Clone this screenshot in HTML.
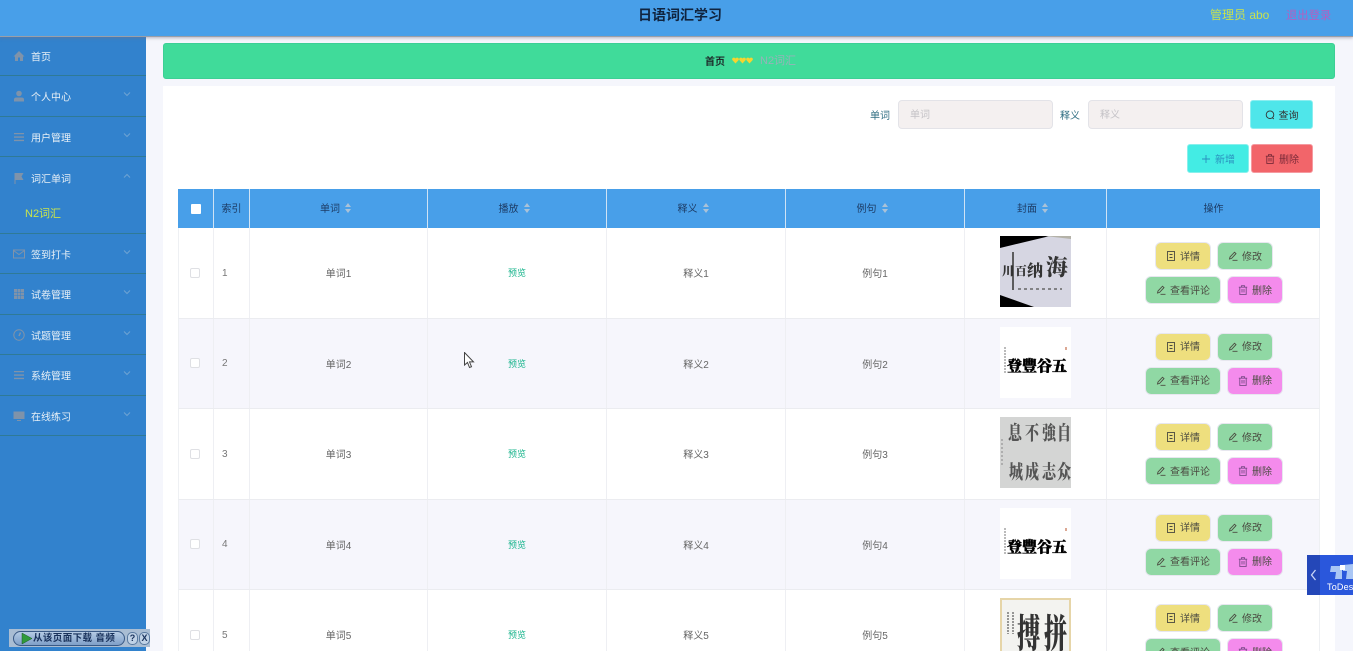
<!DOCTYPE html>
<html lang="zh-CN">
<head>
<meta charset="utf-8">
<title>日语词汇学习</title>
<style>
*{box-sizing:border-box;margin:0;padding:0}
html,body{width:1353px;height:651px;overflow:hidden}
body{position:relative;background:#f5f6fc;font-family:"Liberation Sans","Noto Sans CJK SC",sans-serif;font-size:10px;color:#666;filter:blur(.35px)}
.a{position:absolute}
#top{left:0;top:0;width:1353px;height:37px;background:#489fe9;border-bottom:1px solid #9a9fa8;box-shadow:0 1px 3px rgba(120,110,130,.5);z-index:3}
#title{left:0;width:1353px;top:5px;text-align:center;font-size:14px;line-height:20px;font-weight:700;color:#10243f;padding-left:7px}
#side{left:0;top:37px;width:146px;height:614px;background:#3282cd;z-index:2}
.m{position:absolute;left:0;width:146px;border-bottom:1px solid #2f7a96}
.m span{position:absolute;left:31px;top:50%;transform:translateY(-50%);color:#e8f0f6;font-size:10px;white-space:nowrap}
.m svg.i{position:absolute;left:13px;top:50%;margin-top:-6px;width:12px;height:12px;fill:#7f93aa}
.m svg.c{position:absolute;left:123px;top:50%;margin-top:-6px;width:8px;height:8px;fill:none;stroke:#6ea3d3;stroke-width:1}
#sub{position:absolute;left:25px;color:#c9e44d;font-size:11px;line-height:14px}
#crumb{left:163px;top:43px;width:1172px;height:36px;background:#40db9a;border-radius:3px;border:1px solid #3ccf95}
#panel{left:163px;top:86px;width:1172px;height:565px;background:#fff}
.inp{height:29px;width:155px;top:100px;background:#f4f0f0;border:1px solid #e3e3e8;border-radius:4px;color:#c4c2c6;padding-left:11px;line-height:30px}
.lb{top:107px;color:#2f6e82}
.b{height:29px;width:63px;border-radius:3px;display:flex;align-items:center;justify-content:center;gap:4px;color:#333}
.b svg,.o svg{width:10px;height:10px;fill:none;stroke:currentColor;stroke-width:.9}
#head{left:178px;top:189px;width:1142px;height:39px;background:#489fe9;color:#1d3c66;z-index:1}
.h{position:absolute;top:0;height:39px;border-right:1px solid #cfe3f5;display:flex;align-items:center;justify-content:center;gap:4px;padding-bottom:2px}
.s{transform:translateX(-3px);font-weight:400}
.h i{display:block;width:7px;height:10px;position:relative;transform:translateX(-2px)}
.h i:before,.h i:after{content:"";position:absolute;left:0;border-left:3.5px solid transparent;border-right:3.5px solid transparent}
.h i:before{top:0;border-bottom:4px solid #aac2d8}
.h i:after{bottom:0;border-top:4px solid #aac2d8}
.r{position:absolute;left:178px;width:1142px;border-bottom:1px solid #ebecf0;border-left:1px solid #eef0f3;border-right:1px solid #eef0f3;background:#fff}
.r.e{background:#f6f6fc}
.d{position:absolute;top:0;height:100%;border-right:1px solid #eeeff3;display:flex;align-items:center;justify-content:center}
.d1{left:0;width:35px;padding-right:3px}
.d2{left:35px;width:36px;justify-content:flex-start;padding-left:8px;padding-top:1px;color:#777}
.d3{left:71px;width:178px}
.d4{left:249px;width:179px;color:#18b48c;font-size:9px}
.d5{left:428px;width:179px}
.d6{left:607px;width:179px}
.d7{left:786px;width:142px}
.chk{width:10px;height:10px;border:1px solid #dfe0e4;border-radius:2px;background:#fff}
.pic{position:absolute;left:821px;top:8px;width:71px;height:71px;overflow:hidden}
.pic text{font-family:"Noto Serif CJK SC","Liberation Serif",serif;font-weight:900}
.o{position:absolute;height:28px;border-radius:6px;display:flex;align-items:center;justify-content:center;gap:4px;color:#4a4a40;border:1px solid #e7e7ef;z-index:1;padding-bottom:2px}
.o svg{position:relative;top:1px}
.y{background:#eedf7e;width:56px;left:1155px}
.g{background:#90d8a4;width:56px;left:1217px}
.v{background:#90d8a4;width:76px;left:1145px}
.p{background:#f48bec;width:56px;left:1227px}
.p svg{color:#7a4a88}
</style>
</head>
<body>
<svg width="0" height="0" style="position:absolute">
<defs>
<symbol id="doc" viewBox="0 0 10 10"><rect x="1.500" y=".5" width="7" height="9"/><path d="M3.500 3.500h3M3.500 6.500h3"/></symbol>
<symbol id="pen" viewBox="0 0 10 10"><path d="M1.500 8 2 6 6.500 1.200 8 2.600 3.600 7.400 1.500 8ZM4.500 9.300h5"/></symbol>
<symbol id="bin" viewBox="0 0 10 10"><path d="M.8 2.200h8.400M3.500 2.200V.7h3v1.500M1.800 2.200v7.200h6.400V2.200M4 4v3.500M6 4v3.500"/></symbol>
<symbol id="chev" viewBox="0 0 8 8"><path d="M1 2.500 4 5.500 7 2.500"/></symbol>
</defs>
</svg>

<div class="a" id="top">
  <div class="a" id="title">日语词汇学习</div>
  <div class="a" style="left:1210px;top:7px;font-size:12px;line-height:16px;color:#c8e24e;white-space:nowrap">管理员 abo</div>
  <div class="a" style="left:1286px;top:8px;font-size:11.300px;line-height:16px;color:#b45fc0;white-space:nowrap">退出登录</div>
</div>

<div class="a" id="side">
  <div class="m" style="top:0;height:39px"><svg class="i" viewBox="0 0 12 12"><path d="M6 1 .5 6.500H2V11h3V7.500h2V11h3V6.500h1.500Z"/></svg><span>首页</span></div>
  <div class="m" style="top:39px;height:41px"><svg class="i" viewBox="0 0 12 12"><circle cx="6" cy="3.500" r="2.800"/><path d="M1 11.500V9.500Q1 7.500 3.500 7.500h5Q11 7.500 11 9.500v2Z"/></svg><span>个人中心</span><svg class="c"><use href="#chev"/></svg></div>
  <div class="m" style="top:80px;height:40px"><svg class="i" viewBox="0 0 12 12"><path d="M1 2h10v1.300H1ZM1 5.400h10v1.300H1ZM1 8.800h10v1.300H1Z"/></svg><span>用户管理</span><svg class="c"><use href="#chev"/></svg></div>
  <div class="m" style="top:120px;height:77px"><svg class="i" style="top:15px;margin:0" viewBox="0 0 12 12"><path d="M1.500 1h9L8.500 4.500l2 3.500H2.500v4h-1Z"/></svg><span style="top:21px">词汇单词</span><svg class="c" style="top:15px;margin:0;transform:rotate(180deg)"><use href="#chev"/></svg><div id="sub" style="top:50px">N2词汇</div></div>
  <div class="m" style="top:197px;height:40px"><svg class="i" style="fill:none;stroke:#7f93aa" viewBox="0 0 12 12"><rect x=".5" y="2" width="11" height="8"/><path d="M.5 2.500 6 6.500l5.500-4"/></svg><span>签到打卡</span><svg class="c"><use href="#chev"/></svg></div>
  <div class="m" style="top:237px;height:41px"><svg class="i" viewBox="0 0 12 12"><path d="M1 1h3v3H1ZM4.500 1h3v3h-3ZM8 1h3v3H8ZM1 4.500h3v3H1ZM4.500 4.500h3v3h-3ZM8 4.500h3v3H8ZM1 8h3v3H1ZM4.500 8h3v3h-3ZM8 8h3v3H8Z"/></svg><span>试卷管理</span><svg class="c"><use href="#chev"/></svg></div>
  <div class="m" style="top:278px;height:40px"><svg class="i" style="fill:none;stroke:#7f93aa" viewBox="0 0 12 12"><circle cx="6" cy="6" r="5.200"/><path d="M6 7 7.500 3.500" stroke-width="1.500"/></svg><span>试题管理</span><svg class="c"><use href="#chev"/></svg></div>
  <div class="m" style="top:318px;height:41px"><svg class="i" viewBox="0 0 12 12"><path d="M1 2h10v1.300H1ZM1 5.400h10v1.300H1ZM1 8.800h10v1.300H1Z"/></svg><span>系统管理</span><svg class="c"><use href="#chev"/></svg></div>
  <div class="m" style="top:359px;height:40px"><svg class="i" viewBox="0 0 12 12"><path d="M.5 1.500h11v7.500H.5ZM4 10h4v1H4Z"/></svg><span>在线练习</span><svg class="c"><use href="#chev"/></svg></div>
</div>

<div class="a" id="crumb">
  <div class="a" style="left:541px;top:9px;font-weight:700;color:#1d2b2a">首页</div>
  <svg class="a" style="left:568px;top:13px" width="21" height="7" viewBox="0 0 21 7"><path d="M3.500 6.500 .3 3Q-.3 1 1.500.6 3 .4 3.500 1.500 4 .4 5.500.6 7.300 1 6.700 3ZM10.500 6.500 7.300 3Q6.700 1 8.500.6 10 .4 10.500 1.500 11 .4 12.500.6 14.300 1 13.700 3ZM17.500 6.500 14.300 3Q13.700 1 15.500.6 17 .4 17.500 1.500 18 .4 19.500.6 21.300 1 20.700 3Z" fill="#f6d52f"/></svg>
  <div class="a" style="left:596px;top:8px;font-size:11px;color:#95b3b8">N2词汇</div>
</div>

<div class="a" id="panel"></div>
<div class="a lb" style="left:870px">单词</div>
<div class="a inp" style="left:898px">单词</div>
<div class="a lb" style="left:1060px">释义</div>
<div class="a inp" style="left:1088px">释义</div>
<div class="a b" style="left:1250px;top:100px;background:#4fe6ea;border:1px solid #8ceef0"><svg viewBox="0 0 10 10"><circle cx="5" cy="4.700" r="3.800"/><path d="M7.500 7.800 8.800 9"/></svg>查询</div>
<div class="a b" style="left:1187px;top:144px;width:62px;background:#43ece4;color:#2a8fbe;border:1px solid #88f0ec"><svg viewBox="0 0 10 10"><path d="M5 1v8M1 5h8"/></svg>新增</div>
<div class="a b" style="left:1251px;top:144px;width:62px;background:#f2656a;color:#7a2a38;border:1px solid #f59aa0"><svg><use href="#bin"/></svg>删除</div>

<div class="a" id="head">
  <div class="h" style="left:0;width:36px;padding:0"><div style="width:10px;height:10px;background:#fff;border-radius:1px"></div></div>
  <div class="h" style="left:36px;width:36px">索引</div>
  <div class="h" style="left:72px;width:178px"><b class="s">单词</b><i></i></div>
  <div class="h" style="left:250px;width:179px"><b class="s">播放</b><i></i></div>
  <div class="h" style="left:429px;width:179px"><b class="s">释义</b><i></i></div>
  <div class="h" style="left:608px;width:179px"><b class="s">例句</b><i></i></div>
  <div class="h" style="left:787px;width:142px"><b class="s">封面</b><i></i></div>
  <div class="h" style="left:929px;width:213px;border:0">操作</div>
</div>

<!-- row 1 -->
<div class="r" style="top:228px;height:90.500px">
  <div class="d d1"><div class="chk"></div></div><div class="d d2">1</div><div class="d d3">单词1</div><div class="d d4">预览</div><div class="d d5">释义1</div><div class="d d6">例句1</div><div class="d d7"></div>
  <div class="pic" style="background:#d6d6e2">
    <svg width="71" height="71" viewBox="0 0 71 71"><path d="M0 0h50L0 12Z" fill="#000"/><path d="M71 0v3L45 0Z" fill="#b4b2a8"/><path d="M0 59l34 12H0Z" fill="#000"/><text x="8" y="39" text-anchor="middle" font-size="12" fill="#333">川</text><text x="21" y="39" text-anchor="middle" font-size="12" fill="#333">百</text><text x="35" y="40" text-anchor="middle" font-size="16" fill="#333">纳</text><text x="57" y="39" text-anchor="middle" font-size="22" fill="#333">海</text><path d="M13 16v38" stroke="#333" stroke-width="1.500"/><path d="M18 53h44" stroke="#666" stroke-width="1.500" stroke-dasharray="3 3"/></svg>
  </div>
</div>
<div class="o y" style="top:242px"><svg><use href="#doc"/></svg>详情</div>
<div class="o g" style="top:242px"><svg><use href="#pen"/></svg>修改</div>
<div class="o v" style="top:276px"><svg><use href="#pen"/></svg>查看评论</div>
<div class="o p" style="top:276px"><svg><use href="#bin"/></svg>删除</div>

<!-- row 2 -->
<div class="r e" style="top:318.500px;height:90.500px">
  <div class="d d1"><div class="chk"></div></div><div class="d d2">2</div><div class="d d3">单词2</div><div class="d d4">预览</div><div class="d d5">释义2</div><div class="d d6">例句2</div><div class="d d7"></div>
  <div class="pic" style="background:#fff">
    <svg width="71" height="71" viewBox="0 0 71 71"><g fill="#000" stroke="#000" stroke-width=".5" font-size="15"><text x="7" y="44">登</text><text x="22" y="44">豐</text><text x="37" y="44">谷</text><text x="52" y="44">五</text></g><path d="M5 20v26" stroke="#777" stroke-width="1" stroke-dasharray="2 1"/><path d="M66 20v3" stroke="#d08a70" stroke-width="1.500"/></svg>
  </div>
</div>
<div class="o y" style="top:332.500px"><svg><use href="#doc"/></svg>详情</div>
<div class="o g" style="top:332.500px"><svg><use href="#pen"/></svg>修改</div>
<div class="o v" style="top:366.500px"><svg><use href="#pen"/></svg>查看评论</div>
<div class="o p" style="top:366.500px"><svg><use href="#bin"/></svg>删除</div>

<!-- row 3 -->
<div class="r" style="top:409px;height:90.500px">
  <div class="d d1"><div class="chk"></div></div><div class="d d2">3</div><div class="d d3">单词3</div><div class="d d4">预览</div><div class="d d5">释义3</div><div class="d d6">例句3</div><div class="d d7"></div>
  <div class="pic" style="background:#d4d5d4">
    <svg width="71" height="71" viewBox="0 0 71 71"><g fill="#555" font-size="14" transform="scale(1 1.400)"><text x="8" y="16">息</text><text x="25" y="16">不</text><text x="42" y="16">強</text><text x="57" y="16">自</text><text x="9" y="44">城</text><text x="25" y="44">成</text><text x="42" y="44">志</text><text x="57" y="44">众</text></g><path d="M2 22v28" stroke="#888" stroke-width="1" stroke-dasharray="2 2"/></svg>
  </div>
</div>
<div class="o y" style="top:423px"><svg><use href="#doc"/></svg>详情</div>
<div class="o g" style="top:423px"><svg><use href="#pen"/></svg>修改</div>
<div class="o v" style="top:457px"><svg><use href="#pen"/></svg>查看评论</div>
<div class="o p" style="top:457px"><svg><use href="#bin"/></svg>删除</div>

<!-- row 4 -->
<div class="r e" style="top:499.500px;height:90.500px">
  <div class="d d1"><div class="chk"></div></div><div class="d d2">4</div><div class="d d3">单词4</div><div class="d d4">预览</div><div class="d d5">释义4</div><div class="d d6">例句4</div><div class="d d7"></div>
  <div class="pic" style="background:#fff">
    <svg width="71" height="71" viewBox="0 0 71 71"><g fill="#000" stroke="#000" stroke-width=".5" font-size="15"><text x="7" y="44">登</text><text x="22" y="44">豐</text><text x="37" y="44">谷</text><text x="52" y="44">五</text></g><path d="M5 20v26" stroke="#777" stroke-width="1" stroke-dasharray="2 1"/><path d="M66 20v3" stroke="#d08a70" stroke-width="1.500"/></svg>
  </div>
</div>
<div class="o y" style="top:513.500px"><svg><use href="#doc"/></svg>详情</div>
<div class="o g" style="top:513.500px"><svg><use href="#pen"/></svg>修改</div>
<div class="o v" style="top:547.500px"><svg><use href="#pen"/></svg>查看评论</div>
<div class="o p" style="top:547.500px"><svg><use href="#bin"/></svg>删除</div>

<!-- row 5 -->
<div class="r" style="top:590px;height:90.500px">
  <div class="d d1"><div class="chk"></div></div><div class="d d2">5</div><div class="d d3">单词5</div><div class="d d4">预览</div><div class="d d5">释义5</div><div class="d d6">例句5</div><div class="d d7"></div>
  <div class="pic" style="background:#f3f3f0;border:2px solid #e6d5a8">
    <svg width="67" height="67" viewBox="0 0 67 67"><g fill="#333" font-size="23" transform="scale(1 1.700)"><text x="15" y="28">搏</text><text x="42" y="28">拼</text></g><path d="M6 12v22M11 12v22" stroke="#777" stroke-width="1.500" stroke-dasharray="2 1"/></svg>
  </div>
</div>
<div class="o y" style="top:604px"><svg><use href="#doc"/></svg>详情</div>
<div class="o g" style="top:604px"><svg><use href="#pen"/></svg>修改</div>
<div class="o v" style="top:638px"><svg><use href="#pen"/></svg>查看评论</div>
<div class="o p" style="top:638px"><svg><use href="#bin"/></svg>删除</div>

<!-- mouse cursor -->
<svg class="a" style="left:464px;top:352px;z-index:5" width="11" height="17" viewBox="0 0 11 17"><path d="M.5.500V13l3-2.500 2 5 2-.8-2-4.800h4Z" fill="#fff" stroke="#444" stroke-width="1"/></svg>

<!-- download bar -->
<div class="a" style="left:9px;top:629px;width:141px;height:18px;background:#a9bdd3;z-index:6">
  <div class="a" style="left:4px;top:2px;width:112px;height:15px;border-radius:8px;background:linear-gradient(#b5cbe4,#7f9fc8);border:1px solid #3a5a86"></div>
  <svg class="a" style="left:12px;top:3px" width="12" height="13" viewBox="0 0 12 13"><path d="M1 1 11 6.500 1 12Z" fill="#2f9a3a" stroke="#1a5a2a" stroke-width=".5"/></svg>
  <div class="a" style="left:24px;top:2px;line-height:15px;font-size:9.500px;font-weight:700;color:#17305a;white-space:nowrap;letter-spacing:.4px">从该页面下载 音频</div>
  <div class="a" style="left:118px;top:3px;width:11px;height:13px;border-radius:5px;background:#c0d2e6;border:1px solid #5a7aa0;color:#17305a;font-size:9px;font-weight:700;line-height:11px;text-align:center">?</div>
  <div class="a" style="left:130px;top:3px;width:11px;height:13px;border-radius:5px;background:#c0d2e6;border:1px solid #5a7aa0;color:#17305a;font-size:9px;font-weight:700;line-height:11px;text-align:center">X</div>
</div>

<!-- ToDesk -->
<div class="a" style="left:1307px;top:555px;width:46px;height:40px;background:#2a57dc;overflow:hidden;z-index:6">
  <div class="a" style="left:0;top:0;width:13px;height:40px;background:#2447b8"></div>
  <svg class="a" style="left:3px;top:14px" width="7" height="12" viewBox="0 0 7 12"><path d="M5.500 1 1.500 6l4 5" fill="none" stroke="#c9d6f6" stroke-width="1.300"/></svg>
  <svg class="a" style="left:23px;top:7px" width="23" height="18" viewBox="0 0 23 18"><path d="M1 4h11v13H5l1-7H0ZM13 3l10-1v15h-7l1-8h-4Z" fill="#a9c6f5"/><path d="M10 3h5v5h-5Z" fill="#fff"/></svg>
  <div class="a" style="left:20px;top:27px;line-height:11px;font-size:9px;color:#fff;white-space:nowrap;letter-spacing:.2px">ToDesk</div>
</div>
</body>
</html>
